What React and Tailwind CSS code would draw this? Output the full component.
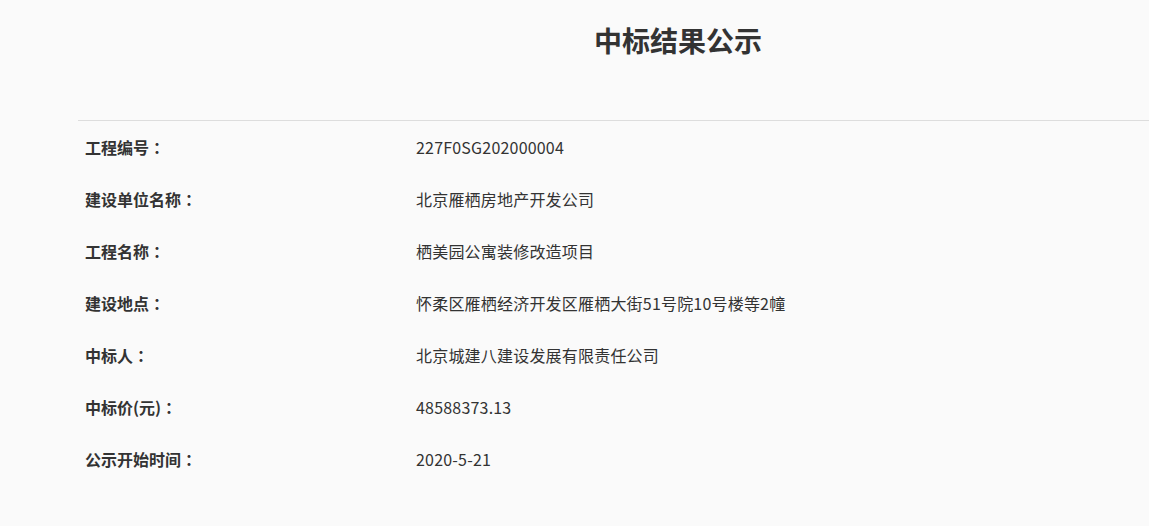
export default function App() {
  const rows = [
    ["工程编号", "227F0SG202000004"],
    ["建设单位名称", "北京雁栖房地产开发公司"],
    ["工程名称", "栖美园公寓装修改造项目"],
    ["建设地点", "怀柔区雁栖经济开发区雁栖大街51号院10号楼等2幢"],
    ["中标人", "北京城建八建设发展有限责任公司"],
    ["中标价(元)", "48588373.13"],
    ["公示开始时间", "2020-5-21"],
  ];
  return (
    <div
      className="w-full h-[526px] overflow-hidden bg-[#fafafa] text-[#333333]"
      style={{ fontFamily: '"Noto Sans CJK SC", "Noto Sans", sans-serif' }}
    >
      <div className="ml-[78px] w-[1200px]">
        <div className="h-[121px] border-b border-[#dddddd] flex justify-center">
          <h1 className="pt-[22px] text-[28px] leading-[36px] font-bold text-[#333333]">
            中标结果公示
          </h1>
        </div>
        <div className="flex flex-col">
          {rows.map(([k, v]) => (
            <div key={k} className="flex h-[52px] items-center text-[16px]">
              <div className="w-[338px] pl-[7px] font-bold">
                {k}
                <span className="font-['Noto_Sans_CJK_TC',sans-serif]">：</span>
              </div>
              <div className="flex-1 tracking-[0.2px]">{v}</div>
            </div>
          ))}
        </div>
      </div>
    </div>
  );
}
